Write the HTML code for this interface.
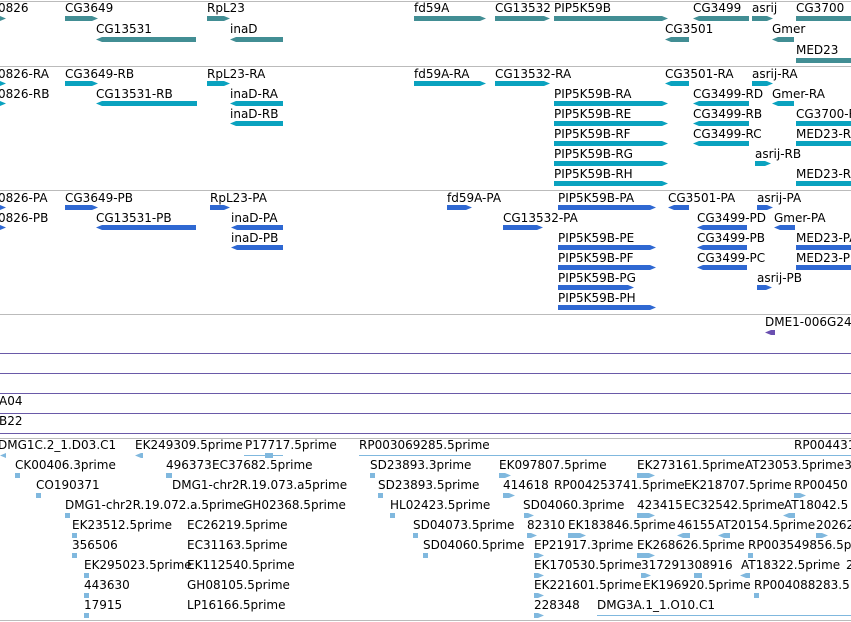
<!DOCTYPE html>
<html><head><meta charset="utf-8"><style>
body{margin:0;width:851px;height:622px;overflow:hidden;background:#fff;position:relative;font-family:"DejaVu Sans","Liberation Sans",sans-serif;}
.t{position:absolute;font-size:12px;line-height:14px;color:#000;white-space:nowrap;}
.b{position:absolute;height:5px;}
.f{clip-path:polygon(0 0,calc(100% - 6px) 0,100% 50%,calc(100% - 6px) 100%,0 100%);}
.r{clip-path:polygon(6px 0,100% 0,100% 100%,6px 100%,0 50%);}
.g{background:#428e94}.c{background:#0aa2bf}.u{background:#2f68d2}.l{background:#80b8de;height:5px}
.hl{position:absolute;left:0;width:851px;height:1px}
.gr{background:#bbb}.pu{background:#6a5aa8}
</style></head><body>
<div class="hl gr" style="top:1px"></div>
<div class="hl gr" style="top:66px"></div>
<div class="hl gr" style="top:190px"></div>
<div class="hl gr" style="top:314px"></div>
<div class="hl pu" style="top:353px"></div>
<div class="hl pu" style="top:373px"></div>
<div class="hl pu" style="top:393px"></div>
<div class="hl pu" style="top:413px"></div>
<div class="hl pu" style="top:433px"></div>
<div class="hl gr" style="top:438px"></div>
<div class="hl gr" style="top:620px"></div>

<div class="t" style="left:-2px;top:1px">0826</div><div class="b g f" style="left:0;top:16px;width:6px"></div>
<div class="t" style="left:65px;top:1px">CG3649</div><div class="b g f" style="left:65px;top:16px;width:33px"></div>
<div class="t" style="left:207px;top:1px">RpL23</div><div class="b g f" style="left:207px;top:16px;width:23px"></div>
<div class="t" style="left:414px;top:1px">fd59A</div><div class="b g f" style="left:414px;top:16px;width:72px"></div>
<div class="t" style="left:495px;top:1px">CG13532</div><div class="b g f" style="left:495px;top:16px;width:55px"></div>
<div class="t" style="left:554px;top:1px">PIP5K59B</div><div class="b g f" style="left:554px;top:16px;width:114px"></div>
<div class="t" style="left:693px;top:1px">CG3499</div><div class="b g r" style="left:693px;top:16px;width:56px"></div>
<div class="t" style="left:752px;top:1px">asrij</div><div class="b g f" style="left:752px;top:16px;width:21px"></div>
<div class="t" style="left:796px;top:1px">CG3700</div><div class="b g" style="left:796px;top:16px;width:55px"></div>
<div class="t" style="left:96px;top:22px">CG13531</div><div class="b g r" style="left:96px;top:37px;width:100px"></div>
<div class="t" style="left:230px;top:22px">inaD</div><div class="b g r" style="left:230px;top:37px;width:53px"></div>
<div class="t" style="left:665px;top:22px">CG3501</div><div class="b g r" style="left:665px;top:37px;width:24px"></div>
<div class="t" style="left:772px;top:22px">Gmer</div><div class="b g r" style="left:772px;top:37px;width:22px"></div>
<div class="t" style="left:796px;top:43px">MED23</div><div class="b g" style="left:796px;top:58px;width:55px"></div>

<div class="t" style="left:-2px;top:67px">0826-RA</div><div class="b c f" style="left:0;top:81px;width:6px"></div>
<div class="t" style="left:65px;top:67px">CG3649-RB</div><div class="b c f" style="left:65px;top:81px;width:33px"></div>
<div class="t" style="left:207px;top:67px">RpL23-RA</div><div class="b c f" style="left:207px;top:81px;width:23px"></div>
<div class="t" style="left:414px;top:67px">fd59A-RA</div><div class="b c f" style="left:414px;top:81px;width:72px"></div>
<div class="t" style="left:495px;top:67px">CG13532-RA</div><div class="b c f" style="left:495px;top:81px;width:55px"></div>
<div class="t" style="left:665px;top:67px">CG3501-RA</div><div class="b c r" style="left:665px;top:81px;width:24px"></div>
<div class="t" style="left:752px;top:67px">asrij-RA</div><div class="b c f" style="left:752px;top:81px;width:21px"></div>
<div class="t" style="left:-2px;top:87px">0826-RB</div><div class="b c f" style="left:0;top:101px;width:6px"></div>
<div class="t" style="left:96px;top:87px">CG13531-RB</div><div class="b c r" style="left:96px;top:101px;width:101px"></div>
<div class="t" style="left:230px;top:87px">inaD-RA</div><div class="b c r" style="left:230px;top:101px;width:53px"></div>
<div class="t" style="left:554px;top:87px">PIP5K59B-RA</div><div class="b c f" style="left:554px;top:101px;width:114px"></div>
<div class="t" style="left:693px;top:87px">CG3499-RD</div><div class="b c r" style="left:693px;top:101px;width:56px"></div>
<div class="t" style="left:772px;top:87px">Gmer-RA</div><div class="b c r" style="left:772px;top:101px;width:22px"></div>
<div class="t" style="left:230px;top:107px">inaD-RB</div><div class="b c r" style="left:230px;top:121px;width:53px"></div>
<div class="t" style="left:554px;top:107px">PIP5K59B-RE</div><div class="b c f" style="left:554px;top:121px;width:114px"></div>
<div class="t" style="left:693px;top:107px">CG3499-RB</div><div class="b c r" style="left:693px;top:121px;width:56px"></div>
<div class="t" style="left:796px;top:107px">CG3700-RA</div><div class="b c" style="left:796px;top:121px;width:55px"></div>
<div class="t" style="left:554px;top:127px">PIP5K59B-RF</div><div class="b c f" style="left:554px;top:141px;width:114px"></div>
<div class="t" style="left:693px;top:127px">CG3499-RC</div><div class="b c r" style="left:693px;top:141px;width:56px"></div>
<div class="t" style="left:796px;top:127px">MED23-RA</div><div class="b c" style="left:796px;top:141px;width:55px"></div>
<div class="t" style="left:554px;top:147px">PIP5K59B-RG</div><div class="b c f" style="left:554px;top:161px;width:114px"></div>
<div class="t" style="left:755px;top:147px">asrij-RB</div><div class="b c f" style="left:755px;top:161px;width:16px"></div>
<div class="t" style="left:554px;top:167px">PIP5K59B-RH</div><div class="b c f" style="left:554px;top:181px;width:114px"></div>
<div class="t" style="left:796px;top:167px">MED23-RB</div><div class="b c" style="left:796px;top:181px;width:55px"></div>

<div class="t" style="left:-2px;top:191px">0826-PA</div><div class="b u f" style="left:0;top:205px;width:6px"></div>
<div class="t" style="left:65px;top:191px">CG3649-PB</div><div class="b u f" style="left:65px;top:205px;width:33px"></div>
<div class="t" style="left:210px;top:191px">RpL23-PA</div><div class="b u f" style="left:210px;top:205px;width:20px"></div>
<div class="t" style="left:447px;top:191px">fd59A-PA</div><div class="b u f" style="left:447px;top:205px;width:25px"></div>
<div class="t" style="left:558px;top:191px">PIP5K59B-PA</div><div class="b u f" style="left:558px;top:205px;width:98px"></div>
<div class="t" style="left:668px;top:191px">CG3501-PA</div><div class="b u r" style="left:668px;top:205px;width:21px"></div>
<div class="t" style="left:757px;top:191px">asrij-PA</div><div class="b u f" style="left:757px;top:205px;width:16px"></div>
<div class="t" style="left:-2px;top:211px">0826-PB</div><div class="b u f" style="left:0;top:225px;width:6px"></div>
<div class="t" style="left:96px;top:211px">CG13531-PB</div><div class="b u r" style="left:96px;top:225px;width:100px"></div>
<div class="t" style="left:231px;top:211px">inaD-PA</div><div class="b u r" style="left:231px;top:225px;width:52px"></div>
<div class="t" style="left:503px;top:211px">CG13532-PA</div><div class="b u f" style="left:503px;top:225px;width:40px"></div>
<div class="t" style="left:697px;top:211px">CG3499-PD</div><div class="b u r" style="left:697px;top:225px;width:50px"></div>
<div class="t" style="left:774px;top:211px">Gmer-PA</div><div class="b u r" style="left:774px;top:225px;width:21px"></div>
<div class="t" style="left:231px;top:231px">inaD-PB</div><div class="b u r" style="left:231px;top:245px;width:52px"></div>
<div class="t" style="left:558px;top:231px">PIP5K59B-PE</div><div class="b u f" style="left:558px;top:245px;width:98px"></div>
<div class="t" style="left:697px;top:231px">CG3499-PB</div><div class="b u r" style="left:697px;top:245px;width:50px"></div>
<div class="t" style="left:796px;top:231px">MED23-PA</div><div class="b u" style="left:796px;top:245px;width:55px"></div>
<div class="t" style="left:558px;top:251px">PIP5K59B-PF</div><div class="b u f" style="left:558px;top:265px;width:98px"></div>
<div class="t" style="left:697px;top:251px">CG3499-PC</div><div class="b u r" style="left:697px;top:265px;width:50px"></div>
<div class="t" style="left:796px;top:251px">MED23-PB</div><div class="b u" style="left:796px;top:265px;width:55px"></div>
<div class="t" style="left:558px;top:271px">PIP5K59B-PG</div><div class="b u f" style="left:558px;top:285px;width:76px"></div>
<div class="t" style="left:757px;top:271px">asrij-PB</div><div class="b u f" style="left:757px;top:285px;width:15px"></div>
<div class="t" style="left:558px;top:291px">PIP5K59B-PH</div><div class="b u f" style="left:558px;top:305px;width:98px"></div>

<div class="t" style="left:765px;top:315px">DME1-006G24</div><div class="b r" style="left:765px;top:330px;width:10px;background:#6a4fb0"></div>
<div class="t" style="left:-1px;top:394px">A04</div>
<div class="t" style="left:-1px;top:414px">B22</div>

<div class="t" style="left:-2px;top:438px">DMG1C.2_1.D03.C1</div><div class="b l r" style="left:0;top:453px;width:6px"></div>
<div class="t" style="left:135px;top:438px">EK249309.5prime</div><div class="b l r" style="left:135px;top:453px;width:8px"></div>
<div class="t" style="left:245px;top:438px">P17717.5prime</div><div class="b l" style="left:244px;top:455px;width:39px;height:1px"></div><div class="b l" style="left:265px;top:453px;width:8px"></div>
<div class="t" style="left:359px;top:438px">RP003069285.5prime</div><div class="b l" style="left:359px;top:455px;width:492px;height:1px"></div>
<div class="t" style="left:794px;top:438px">RP004431</div>

<div class="t" style="left:15px;top:458px">CK00406.3prime</div><div class="b l" style="left:15px;top:473px;width:5px"></div>
<div class="t" style="left:166px;top:458px">496373</div><div class="b l" style="left:166px;top:473px;width:6px"></div>
<div class="t" style="left:212px;top:458px">EC37682.5prime</div>
<div class="t" style="left:370px;top:458px">SD23893.3prime</div><div class="b l" style="left:370px;top:473px;width:5px"></div>
<div class="t" style="left:499px;top:458px">EK097807.5prime</div><div class="b l f" style="left:499px;top:473px;width:12px"></div>
<div class="t" style="left:637px;top:458px">EK273161.5prime</div><div class="b l f" style="left:637px;top:473px;width:18px"></div>
<div class="t" style="left:745px;top:458px">AT23053.5prime3</div>

<div class="t" style="left:36px;top:478px">CO190371</div><div class="b l" style="left:36px;top:493px;width:5px"></div>
<div class="t" style="left:172px;top:478px">DMG1-chr2R.19.073.a5prime</div>
<div class="t" style="left:378px;top:478px">SD23893.5prime</div><div class="b l" style="left:378px;top:493px;width:5px"></div>
<div class="t" style="left:503px;top:478px">414618</div><div class="b l f" style="left:503px;top:493px;width:12px"></div>
<div class="t" style="left:554px;top:478px">RP004253741.5prime</div>
<div class="t" style="left:684px;top:478px">EK218707.5prime</div>
<div class="t" style="left:794px;top:478px">RP00450</div><div class="b l f" style="left:794px;top:493px;width:12px"></div>

<div class="t" style="left:65px;top:498px">DMG1-chr2R.19.072.a.5prime</div><div class="b l" style="left:65px;top:513px;width:5px"></div>
<div class="t" style="left:243px;top:498px">GH02368.5prime</div>
<div class="t" style="left:390px;top:498px">HL02423.5prime</div><div class="b l" style="left:390px;top:513px;width:5px"></div>
<div class="t" style="left:523px;top:498px">SD04060.3prime</div><div class="b l f" style="left:524px;top:513px;width:10px"></div>
<div class="t" style="left:637px;top:498px">423415</div><div class="b l f" style="left:637px;top:513px;width:18px"></div>
<div class="t" style="left:684px;top:498px">EC32542.5prime</div>
<div class="t" style="left:784px;top:498px">AT18042.5</div><div class="b l r" style="left:783px;top:513px;width:12px"></div>

<div class="t" style="left:72px;top:518px">EK23512.5prime</div><div class="b l" style="left:72px;top:533px;width:5px"></div>
<div class="t" style="left:187px;top:518px">EC26219.5prime</div>
<div class="t" style="left:413px;top:518px">SD04073.5prime</div><div class="b l" style="left:413px;top:533px;width:5px"></div>
<div class="t" style="left:527px;top:518px">82310</div><div class="b l f" style="left:527px;top:533px;width:10px"></div>
<div class="t" style="left:568px;top:518px">EK183846.5prime</div><div class="b l f" style="left:568px;top:533px;width:18px"></div>
<div class="t" style="left:677px;top:518px">46155</div><div class="b l r" style="left:677px;top:533px;width:13px"></div>
<div class="t" style="left:716px;top:518px">AT20154.5prime</div><div class="b l r" style="left:718px;top:533px;width:12px"></div>
<div class="t" style="left:816px;top:518px">20262</div><div class="b l f" style="left:816px;top:533px;width:12px"></div>

<div class="t" style="left:72px;top:538px">356506</div><div class="b l" style="left:72px;top:553px;width:5px"></div>
<div class="t" style="left:187px;top:538px">EC31163.5prime</div>
<div class="t" style="left:423px;top:538px">SD04060.5prime</div><div class="b l" style="left:423px;top:553px;width:5px"></div>
<div class="t" style="left:534px;top:538px">EP21917.3prime</div><div class="b l f" style="left:534px;top:553px;width:10px"></div>
<div class="t" style="left:637px;top:538px">EK268626.5prime</div><div class="b l f" style="left:637px;top:553px;width:18px"></div>
<div class="t" style="left:748px;top:538px">RP003549856.5p</div><div class="b l" style="left:748px;top:553px;width:5px"></div>

<div class="t" style="left:84px;top:558px">EK295023.5prime</div><div class="b l" style="left:84px;top:573px;width:5px"></div>
<div class="t" style="left:187px;top:558px">EK112540.5prime</div>
<div class="t" style="left:534px;top:558px">EK170530.5prime</div><div class="b l f" style="left:534px;top:573px;width:10px"></div>
<div class="t" style="left:641px;top:558px">317291308916</div><div class="b l f" style="left:641px;top:573px;width:10px"></div><div class="b l" style="left:694px;top:573px;width:8px"></div>
<div class="t" style="left:741px;top:558px">AT18322.5prime</div><div class="b l r" style="left:740px;top:573px;width:10px"></div>
<div class="t" style="left:846px;top:558px">2</div>

<div class="t" style="left:84px;top:578px">443630</div><div class="b l" style="left:84px;top:593px;width:5px"></div>
<div class="t" style="left:187px;top:578px">GH08105.5prime</div>
<div class="t" style="left:534px;top:578px">EK221601.5prime</div><div class="b l f" style="left:534px;top:593px;width:10px"></div>
<div class="t" style="left:643px;top:578px">EK196920.5prime</div>
<div class="t" style="left:754px;top:578px">RP004088283.5</div><div class="b l" style="left:754px;top:593px;width:5px"></div>

<div class="t" style="left:84px;top:598px">17915</div><div class="b l" style="left:84px;top:613px;width:5px"></div>
<div class="t" style="left:187px;top:598px">LP16166.5prime</div>
<div class="t" style="left:534px;top:598px">228348</div><div class="b l f" style="left:534px;top:613px;width:10px"></div>
<div class="t" style="left:597px;top:598px">DMG3A.1_1.O10.C1</div><div class="b l" style="left:597px;top:615px;width:254px;height:1px"></div>
</body></html>
